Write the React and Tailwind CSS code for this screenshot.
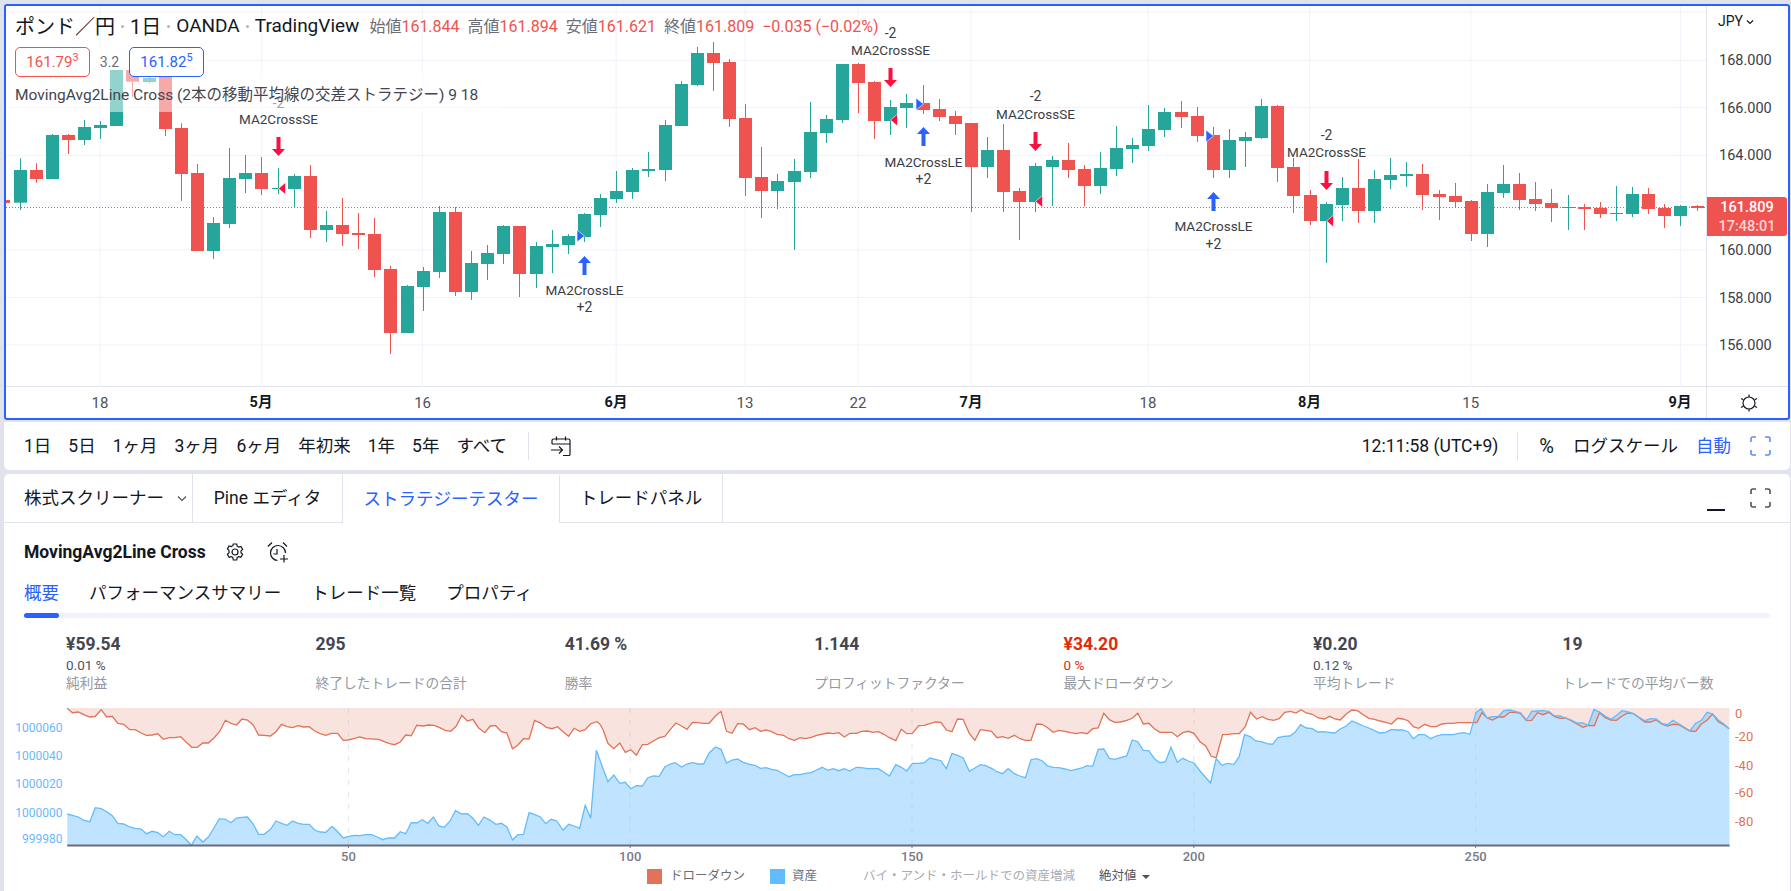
// candles: [wickTop, wickBottom, bodyTop, bodyBottom, up], read at 3x
const g = 1, r = 0;
const candles = [
  [475,630,510,608,g],[490,548,510,537,r],[402,537,405,537,g],[402,462,405,420,r],[360,435,381,420,g],
  [363,417,375,384,g],[150,378,150,378,g],[150,290,150,245,r],[150,250,234,246,g],[150,408,150,387,r],
  [370,603,384,522,r],[492,753,519,753,r],[651,777,669,753,g],[444,684,534,672,g],[465,579,519,537,g],
  [471,585,519,567,r],[504,582,564,567,g],[522,621,528,567,g],[495,714,528,690,r],[633,726,675,690,g],
  [594,738,675,702,r],[639,747,699,705,r],[654,831,702,810,r],[798,1062,807,999,r],[855,999,858,999,g],
  [801,933,813,861,g],[618,834,636,816,g],[621,888,636,876,r],[753,900,789,876,g],[735,840,759,792,g],
  [675,792,678,762,g],[678,891,678,822,r],[726,864,738,822,g],[690,819,732,741,g],[702,762,708,735,g],
  [639,726,642,711,g],[582,681,594,645,g],[513,609,573,597,g],[504,597,510,576,g],[456,531,507,513,g],
  [360,543,375,510,g],[243,378,252,378,g],[141,258,159,255,g],[126,273,159,189,r],[177,381,186,357,r],
  [312,588,354,534,r],[441,654,531,573,r],[522,627,543,573,g],[477,750,513,546,g],[306,534,396,516,g],
  [345,429,357,399,g],[192,369,192,360,g],[189,339,192,249,r],[243,417,246,363,r],[300,405,321,363,g],
  [282,384,309,324,g],[255,342,309,330,r],[297,363,327,351,r],[333,405,348,372,r],[369,636,369,501,r],
  [411,534,450,501,g],[372,636,450,576,r],[564,720,573,606,r],[489,636,498,606,g],[468,618,480,501,g],
  [429,534,480,510,r],[495,618,507,558,r],[456,582,504,558,g],[378,528,444,507,g],[414,489,435,447,g],
  [315,453,387,438,g],[324,411,336,390,g],[303,384,336,351,r],[321,426,348,408,r],[381,534,405,510,r],
  [387,534,420,510,g],[396,501,411,423,g],[297,417,318,414,g],[315,546,318,504,r],[474,639,501,588,r],
  [570,675,585,663,r],[606,789,612,663,g],[531,663,564,615,g],[477,669,564,633,r],[510,669,537,633,g],
  [474,567,525,540,g],[486,561,522,528,g],[492,630,522,585,r],[570,660,582,591,r],[549,621,588,606,r],
  [600,723,603,702,r],[552,741,576,702,g],[495,594,552,579,g],[519,630,552,600,r],[546,633,597,612,r],
  [567,666,609,624,r],[585,690,621,624,g],[612,690,621,627,r],[606,654,624,642,r],[558,663,639,642,g],
  [561,651,582,642,g],[564,642,582,627,r],[612,684,624,648,r],[615,678,618,648,g],[615,633,618,624,r],
];
const cx = (i) => 19.5 + 16.125 * i;

const hLines = [12, 60.5, 107.5, 155.3, 202, 250, 297.5, 345];
const vLines = [5, 15, 25, 37, 45, 52, 59, 70, 80, 90, 103];
const timeLabels = [
  ["18", 100], ["5月", 261, true], ["16", 422.6], ["6月", 616, true], ["13", 745], ["22", 858],
  ["7月", 971, true], ["18", 1148], ["8月", 1309.5, true], ["15", 1470.7], ["9月", 1680, true],
];
const prices = [["168.000", 60], ["166.000", 107.5], ["164.000", 154.7], ["160.000", 250], ["158.000", 297.7], ["156.000", 345]];

const signals = [
  { i: 16, side: "SE", arrow: 137, minus: 103, text: 119, tri: 188.5 },
  { i: 35, side: "LE", arrow: 256, text: 290, plus: 307, tri: 236 },
  { i: 54, side: "SE", arrow: 68, minus: 33, text: 50, tri: 120 },
  { i: 56, side: "LE", arrow: 127, text: 162, plus: 179, tri: 104 },
  { i: 63, side: "SE", arrow: 132, minus: 96, text: 114, tri: 201.5 },
  { i: 74, side: "LE", arrow: 192, text: 226, plus: 244, tri: 136 },
  { i: 81, side: "SE", arrow: 171, minus: 135, text: 152, tri: 221 },
];

const ranges = ["1日", "5日", "1ヶ月", "3ヶ月", "6ヶ月", "年初来", "1年", "5年", "すべて"];
const subTabs = ["概要", "パフォーマンスサマリー", "トレード一覧", "プロパティ"];
const stats = [
  { value: "¥59.54", sub: "0.01 %", label: "純利益" },
  { value: "295", label: "終了したトレードの合計" },
  { value: "41.69 %", label: "勝率" },
  { value: "1.144", label: "プロフィットファクター" },
  { value: "¥34.20", sub: "0 %", label: "最大ドローダウン", down: true },
  { value: "¥0.20", sub: "0.12 %", label: "平均トレード" },
  { value: "19", label: "トレードでの平均バー数" },
];

// equity and drawdown lines, one list per zoomed stretch of the chart
const ddA = "170,55 183,68 198,66 212,74 227,81 241,79 256,59 270,81 284,79 298,100 313,103 328,119 342,119 357,129 370,136 385,135 399,131 413,148 428,143 442,143 457,140 470,155 485,172 499,172 513,159 527,159 541,144 555,125 570,91 584,100 598,105 612,87 626,90 640,105 654,135 668,136 684,138 698,125 712,103 726,110 740,113 754,107 768,111 782,110 796,123 810,131 824,136 838,130 854,130 868,151 880,150 895,146 910,141 925,146 958,148 972,155 985,161 998,164 1012,156 1026,135 1040,137 1054,106 1070,108 1084,105 1098,106 1112,113 1126,121 1140,124 1154,108 1168,76 1182,93 1196,88 1210,113 1226,128 1240,108 1254,107 1268,125 1282,129 1296,176 1310,165 1324,146 1338,147 1352,91 1368,100 1382,112 1396,116 1410,110 1424,125 1438,139 1452,115 1466,124 1480,119 1494,101 1510,95";
const ddB = "0,103 8,120 20,160 35,176 50,159 64,187 78,179 92,196 107,164 121,163 135,153 150,143 164,139 178,118 192,99 206,108 220,118 234,97 248,98 262,100 276,100 292,78 306,64 320,124 334,130 348,101 362,102 378,119 392,113 406,124 420,120 434,125 448,133 464,136 478,146 492,151 506,143 520,146 534,142 548,136 576,129 590,131 604,128 618,141 632,130 648,130 662,124 676,123 690,127 704,125 718,133 732,143 748,152 762,118 776,131 790,130 806,107 820,106 834,101 848,96 862,97 876,120 890,125 904,87 918,88 934,130 948,151 962,119 976,121 990,124 1004,143 1018,140 1032,145 1048,136 1062,146 1076,151 1090,151 1104,102 1118,103 1132,113 1146,127 1160,121 1176,124 1190,128 1204,131 1218,128 1232,131 1246,116 1260,114 1274,70 1288,89 1302,97 1316,96 1332,91 1346,85 1360,70 1374,102 1388,100 1402,116 1416,127 1430,127 1446,127 1460,140 1474,128 1488,124 1502,130";
const ddC = "0,155 15,168 30,199 43,203 60,134 75,133 90,131 104,131 120,110 134,67 150,87 165,80 180,88 195,91 210,86 225,67 240,64 255,69 268,59 282,69 298,73 314,84 330,87 344,79 358,87 372,90 388,72 403,60 418,62 433,74 448,85 463,88 478,93 493,97 508,102 524,85 538,87 552,92 566,110 580,115 596,103 612,110 626,110 642,102 656,100 672,100 686,98 700,98 722,98 735,97 748,68 762,84 776,90 792,81 806,81 822,67 836,67 850,70 866,92 880,91 895,68 910,74 925,67 940,79 955,85 970,84 985,92 1000,102 1016,112 1030,106 1046,107 1060,68 1075,83 1090,90 1105,91 1120,78 1135,69 1150,71 1165,83 1180,96 1195,96 1210,90 1225,102 1240,108 1255,103 1270,104 1285,114 1300,123 1315,124 1330,102 1345,91 1360,72 1375,95 1390,105 1404,116";
const eqA = "170,372 183,376 198,381 212,391 227,395 241,353 256,356 270,365 284,377 298,400 313,402 328,411 342,415 357,417 370,431 385,424 399,428 413,440 428,424 442,434 457,434 470,448 484,466 498,438 513,456 527,441 541,414 555,386 570,388 584,398 598,384 612,382 626,381 640,402 654,433 668,433 684,418 698,393 712,400 726,406 740,393 754,400 768,403 782,403 796,420 810,426 824,427 840,409 854,425 868,444 880,440 895,436 910,437 925,434 940,434 954,441 968,449 982,444 998,444 1012,425 1026,431 1040,398 1054,399 1068,389 1082,400 1096,381 1110,408 1124,412 1138,393 1152,362 1168,372 1182,371 1196,385 1210,406 1224,381 1240,391 1254,403 1268,400 1282,411 1296,450 1310,434 1324,433 1338,368 1352,374 1366,380 1380,401 1394,388 1408,393 1424,421 1438,403 1452,408 1466,415 1480,346 1494,385 1508,181";
const eqB = "20,275 35,255 50,280 64,277 78,296 92,287 107,288 121,263 135,258 150,259 164,231 178,222 190,218 206,231 220,222 234,218 248,222 262,222 276,189 292,171 306,178 320,219 334,210 348,207 362,217 378,223 392,226 406,235 420,233 434,238 448,241 464,251 478,260 492,254 506,254 520,250 534,248 548,240 562,232 576,241 590,236 604,242 618,236 632,243 648,232 662,233 676,236 690,236 704,236 718,247 732,258 748,224 762,232 776,243 790,220 806,220 820,218 834,204 848,208 862,212 876,236 890,190 904,196 918,203 934,244 948,234 962,224 976,227 990,235 1004,245 1018,251 1032,236 1048,251 1062,258 1076,263 1090,209 1104,206 1118,212 1132,228 1146,232 1160,233 1176,237 1190,242 1204,238 1218,234 1232,227 1246,229 1260,178 1274,177 1288,205 1302,208 1316,203 1332,198 1346,150 1360,155 1374,181 1388,182 1402,206 1416,218 1430,215 1444,172 1460,217 1474,205 1488,213 1502,219";
const eqC = "0,243 28,279 43,206 58,226 73,220 90,223 104,200 118,134 133,140 148,153 163,155 178,161 192,163 207,143 222,139 238,138 252,127 267,104 282,114 298,116 312,126 328,125 342,127 358,129 372,117 388,108 403,93 418,100 433,108 448,114 463,122 478,129 493,127 508,118 524,120 538,120 552,125 566,146 580,134 596,134 612,146 626,138 642,134 656,134 672,134 686,130 700,128 716,133 732,68 746,56 762,84 776,80 792,79 806,62 822,60 836,64 850,68 866,90 880,64 895,63 910,62 925,64 940,77 955,78 970,84 985,90 1000,99 1016,99 1030,106 1045,58 1060,66 1075,78 1090,88 1105,76 1120,62 1135,66 1150,71 1165,82 1180,92 1195,86 1210,87 1225,100 1240,104 1255,91 1270,101 1285,112 1300,122 1315,100 1330,91 1345,67 1360,72 1375,90 1390,102 1404,116";

const toPts = (s, scale, off) =>
  s.split(" ").map((p) => {
    const [x, y] = p.split(",").map(Number);
    return [off + x / scale, 690 + y / 3];
  });
const line = (a, b, c) => [...toPts(a, 2.529, 0), ...toPts(b, 2.529, 600), ...toPts(c, 2.653, 1200)];
const ptsStr = (pts) => pts.map(([x, y]) => `${x.toFixed(1)},${y.toFixed(1)}`).join(" ");

const drawdown = line(ddA, ddB, ddC);
const equity = line(eqA, eqB, eqC);
const X0 = 67.2;
const X1 = 1729.6;
const TOP = 708;
const BASE = 845;

function CandleChart() {
  return (
    <svg className="block absolute inset-0" width="1702" height="381" viewBox="6 6 1702 381">
      {hLines.map((y) => (
        <line key={y} x1="6" x2="1708" y1={y} y2={y} stroke="#f0f3fa" strokeWidth="1" />
      ))}
      {vLines.map((i) => (
        <line key={i} x1={cx(i)} x2={cx(i)} y1="6" y2="387" stroke="#f0f3fa" strokeWidth="1" />
      ))}
      <rect x="6" y="200" width="4" height="3" fill="#ef5350" />
      <line x1="6" x2="1708" y1="207.5" y2="207.5" stroke="#ef5350" strokeWidth="1" strokeDasharray="1 2" />
      {candles.map(([wt, wb, bt, bb, up], i) => {
        const color = up ? "#26a69a" : "#ef5350";
        const x = Math.round(cx(i)) + 0.5;
        return (
          <g key={i} fill={color}>
            <rect x={x - 0.5} y={wt / 3} width="1" height={(wb - wt) / 3} />
            <rect x={x - 6.5} y={bt / 3} width="13" height={Math.max(1, (bb - bt) / 3)} />
          </g>
        );
      })}
      {signals.map((s) => {
        const x = Math.round(cx(s.i)) + 0.5;
        const up = s.side === "LE";
        const color = up ? "#2962ff" : "#ff0f3f";
        const a = s.arrow;
        return (
          <g key={s.i}>
            {up ? (
              <path d={`M${x} ${a}l6.5 7h-4.5v12h-4v-12h-4.5z`} fill={color} />
            ) : (
              <path d={`M${x} ${a + 19}l-6.5 -7h4.5v-12h4v12h4.5z`} fill={color} />
            )}
            {up ? (
              <path d={`M${x - 7.5} ${s.tri - 6}l7.5 6l-7.5 6z`} fill={color} stroke="#fff" strokeWidth="0.6" />
            ) : (
              <path d={`M${x + 7} ${s.tri - 6}l-7 6l7 6z`} fill={color} stroke="#fff" strokeWidth="0.6" />
            )}
            <text x={x} y={s.text + 5} textAnchor="middle" fontSize="13.5" fill="#3b3e47">
              {`MA2Cross${s.side}`}
            </text>
            {s.minus && (
              <text x={x} y={s.minus + 5} textAnchor="middle" fontSize="14" fill="#3b3e47">-2</text>
            )}
            {s.plus && (
              <text x={x} y={s.plus + 5} textAnchor="middle" fontSize="14" fill="#3b3e47">+2</text>
            )}
          </g>
        );
      })}
    </svg>
  );
}

function Dot() {
  return <span className="w-[3px] h-[3px] bg-[#b2b5be] rounded-full mx-[6px] shrink-0" />;
}

function Legend() {
  return (
    <div className="absolute left-0 top-0 text-[#131722]">
      <div className="flex items-center h-[41px] pl-[9px] whitespace-nowrap">
        <span className="text-[20px]">ポンド／円</span>
        <Dot />
        <span className="text-[20px]">1日</span>
        <Dot />
        <span className="text-[19px]">OANDA</span>
        <Dot />
        <span className="text-[19px]">TradingView</span>
        <div className="flex items-center ml-[10px] text-[16px] text-[#ef5350]">
          <span className="text-[#6a6d78]">始値</span>161.844
          <span className="text-[#6a6d78] ml-[8px]">高値</span>161.894
          <span className="text-[#6a6d78] ml-[8px]">安値</span>161.621
          <span className="text-[#6a6d78] ml-[8px]">終値</span>161.809
          <span className="ml-[8px]">−0.035 (−0.02%)</span>
        </div>
      </div>
      <div className="relative flex items-start w-[199px] h-[23px] bg-white ml-[1px] pl-[8px]">
        <div className="w-[75px] h-[30px] shrink-0 flex items-center justify-center bg-white border border-[#ef5350] rounded-[5px] text-[#ef5350] text-[15px]">
          161.79<sup className="text-[11px] top-[-4px]">3</sup>
        </div>
        <div className="w-[39px] h-[30px] shrink-0 flex items-center justify-center text-[14px] text-[#6a6d78]">3.2</div>
        <div className="w-[75px] h-[30px] shrink-0 flex items-center justify-center bg-white border border-[#2962ff] rounded-[5px] text-[#2962ff] text-[15px]">
          161.82<sup className="text-[11px] top-[-4px]">5</sup>
        </div>
      </div>
      <div className="h-[42px] w-[494px] bg-white/50 flex items-end pb-[5px] pl-[9px] text-[15.5px] text-[#434651] whitespace-nowrap">
        MovingAvg2Line Cross (2本の移動平均線の交差ストラテジー) 9 18
      </div>
    </div>
  );
}

function PriceAxis() {
  return (
    <div className="relative w-[82px] shrink-0 border-l border-[#e0e3eb] text-[#131722] text-[14.5px]">
      <div className="absolute left-[11px] top-[5px] flex items-center gap-[3px] text-[14px]">
        JPY
        <svg width="8" height="6" viewBox="0 0 8 6">
          <path d="M1 1.5l3 3 3-3" fill="none" stroke="#131722" strokeWidth="1.2" />
        </svg>
      </div>
      {prices.map(([p, y]) => (
        <span key={p} className="absolute left-[12px] -translate-y-1/2 text-[#3b3e47]" style={{ top: y - 5 }}>
          {p}
        </span>
      ))}
      <div className="absolute left-0 top-[191px] w-[80px] h-[39px] bg-[#ef5350] rounded-r-[3px] flex flex-col items-center justify-center text-white leading-[19px]">
        <span className="font-medium">161.809</span>
        <span className="text-white/75 font-medium">17:48:01</span>
      </div>
    </div>
  );
}

function TimeAxis() {
  return (
    <div className="flex h-[32px] border-t border-[#e0e3eb]">
      <div className="relative flex-1 text-[15px] text-[#4c525e]">
        {timeLabels.map(([t, x, bold]) => (
          <span
            key={x}
            className={bold ? "absolute top-[5px] -translate-x-1/2 font-bold text-[#131722] text-[14.5px]" : "absolute top-[5px] -translate-x-1/2"}
            style={{ left: x - 6 }}
          >
            {t}
          </span>
        ))}
      </div>
      <div className="w-[82px] shrink-0 border-l border-[#e0e3eb] flex items-center justify-center pl-[3px]">
        <svg width="20" height="20" viewBox="0 0 20 20" fill="none" stroke="#131722" strokeWidth="1.2">
          <circle cx="10" cy="10" r="6" />
          <path d="M10 1.5v2.5M10 16v2.5M2 5.5l2.3 1.3M15.7 13.2l2.3 1.3M2 14.5l2.3-1.3M15.7 6.8l2.3-1.3" />
        </svg>
      </div>
    </div>
  );
}

function FullscreenIcon({ color, className }) {
  return (
    <svg className={className} width="21" height="20" viewBox="0 0 21 20" fill="none" stroke={color} strokeWidth="1.6">
      <path d="M1 6V3a2 2 0 0 1 2-2h3M15 1h3a2 2 0 0 1 2 2v3M20 14v3a2 2 0 0 1-2 2h-3M6 19H3a2 2 0 0 1-2-2v-3" />
    </svg>
  );
}

function Toolbar() {
  return (
    <div className="flex items-center h-[48px] mt-[2px] bg-white rounded-b-[5px] pl-[20px] text-[17.5px] text-[#131722] whitespace-nowrap">
      <div className="flex items-center gap-[17px]">
        {ranges.map((t) => (
          <span key={t}>{t}</span>
        ))}
      </div>
      <div className="w-px h-[28px] bg-[#e0e3eb] ml-[21px]" />
      <svg className="ml-[21px]" width="22" height="22" viewBox="0 0 22 22" fill="none" stroke="#131722" strokeWidth="1.2">
        <path d="M2 9V5.5a1.5 1.5 0 0 1 1.5-1.5h15A1.5 1.5 0 0 1 20 5.5v14a1 1 0 0 1-1 1h-6M6.5 1.5v4M15.5 1.5v4M2 9h18M1 15h11M9 11.5l3.5 3.5L9 18.5" />
      </svg>
      <div className="flex items-center ml-auto">
        <span>12:11:58 (UTC+9)</span>
        <div className="w-px h-[28px] bg-[#e0e3eb] ml-[19px] mr-[21px]" />
        <span className="text-[20px]">%</span>
        <span className="ml-[19px]">ログスケール</span>
        <span className="ml-[18px] text-[#2962ff]">自動</span>
        <FullscreenIcon color="#5b8cff" className="ml-[19px] mr-[19px]" />
      </div>
    </div>
  );
}

function Tabs() {
  return (
    <div className="flex items-stretch h-[49px] border-b border-[#e0e3eb] text-[17.5px] text-[#131722] whitespace-nowrap">
      <div className="w-[189px] flex items-center pl-[20px] border-r border-[#e0e3eb]">
        株式スクリーナー
        <svg className="ml-[13px]" width="10" height="7" viewBox="0 0 10 7">
          <path d="M1 1.5l4 4 4-4" fill="none" stroke="#50535e" strokeWidth="1.2" />
        </svg>
      </div>
      <div className="w-[150px] flex items-center justify-center border-r border-[#e0e3eb]">Pine エディタ</div>
      <div className="w-[217px] flex items-center justify-center border-r border-[#e0e3eb] text-[#2962ff] bg-white relative top-px">
        ストラテジーテスター
      </div>
      <div className="w-[163px] flex items-center justify-center border-r border-[#e0e3eb]">トレードパネル</div>
      <div className="flex items-center ml-auto mr-[19px]">
        <div className="w-[18px] h-[1.5px] bg-[#131722] mt-[24px] mr-[25px]" />
        <FullscreenIcon color="#50535e" />
      </div>
    </div>
  );
}

function Header() {
  return (
    <div className="px-[20px]">
      <div className="flex items-center h-[54px] pt-[4px]">
        <span className="text-[17.5px] font-bold text-[#131722] w-[191px] whitespace-nowrap">MovingAvg2Line Cross</span>
        <svg className="ml-[10px]" width="20" height="20" viewBox="0 0 20 20" fill="none" stroke="#131722" strokeWidth="1.2">
          <path d="M8.3 2h3.4l.5 2.2 1.6.9 2.1-.7 1.7 3-1.6 1.5v1.9l1.6 1.5-1.7 3-2.1-.7-1.6.9-.5 2.5H8.3l-.5-2.5-1.6-.9-2.1.7-1.7-3 1.6-1.5V8.4L2.4 6.9l1.7-3 2.1.7 1.6-.9z" />
          <circle cx="10" cy="10" r="3" />
        </svg>
        <svg className="ml-[21px]" width="24" height="24" viewBox="0 0 24 24" fill="none" stroke="#131722" strokeWidth="1.2">
          <path d="M11.5 20.5a7.5 7.5 0 1 1 8-7.5M1.8 6.5L6 2.5M21 6.5l-4-4M3.5 5L5.5 3M11 9v5h-3.5M18 15v7.5M14 19h8" />
        </svg>
      </div>
      <div className="flex gap-[30px] text-[17.5px] text-[#131722] h-[33px] items-center whitespace-nowrap">
        {subTabs.map((t, i) => (
          <span key={t} className={i === 0 ? "text-[#2962ff]" : ""}>{t}</span>
        ))}
      </div>
      <div className="h-[5px] bg-[#f0f3fa] rounded-full mt-[3px]">
        <div className="w-[35px] h-[5px] bg-[#2962ff] rounded-full" />
      </div>
    </div>
  );
}

function Stats() {
  return (
    <div className="grid grid-cols-[repeat(7,249.4px)] pl-[62px] pt-[15px] h-[73px] whitespace-nowrap">
      {stats.map((s) => (
        <div key={s.label} className="flex flex-col">
          <span className={s.down ? "text-[17.5px] leading-[22px] font-bold text-[#e02b0c]" : "text-[17.5px] leading-[22px] font-bold text-[#434651]"}>
            {s.value}
          </span>
          <span className={s.down ? "text-[13.5px] h-[19px] leading-[21px] text-[#e02b0c]" : "text-[13.5px] h-[19px] leading-[21px] text-[#50535e]"}>
            {s.sub}
          </span>
          <span className="text-[13.75px] leading-[19px] text-[#9598a1]">{s.label}</span>
        </div>
      ))}
    </div>
  );
}

function EquityChart() {
  const ticks = [50, 100, 150, 200, 250];
  const yLeft = [["1000060", 727.7], ["1000040", 755.7], ["1000020", 783], ["1000000", 812.7], ["999980", 838.7]];
  const yRight = [["0", 713], ["-20", 736.7], ["-40", 765.7], ["-60", 792.7], ["-80", 821.3]];
  const ddPoly = `${X0},${TOP} ${ptsStr(drawdown)} ${X1},${TOP}`;
  const eqPoly = `${X0},${BASE} ${ptsStr(equity)} ${X1},${BASE}`;
  return (
    <svg className="block absolute left-0 top-[700px]" width="1791" height="191" viewBox="0 700 1791 191">
      <polygon points={ddPoly} fill="#e27258" fillOpacity="0.2" />
      <polygon points={eqPoly} fill="#61bcff" fillOpacity="0.4" />
      {ticks.map((t) => {
        const x = 66.6 + t * 5.636;
        return (
          <g key={t}>
            <line x1={x} x2={x} y1={TOP} y2={BASE} stroke="#b2b5be" strokeOpacity="0.35" strokeWidth="1" strokeDasharray="5 7" />
            <line x1={x} x2={x} y1={BASE} y2={BASE + 3} stroke="#787b86" strokeWidth="1" />
            <text x={x} y={860.5} textAnchor="middle" fontSize="13" fontWeight="500" fill="#787b86">{t}</text>
          </g>
        );
      })}
      <polyline points={ptsStr(drawdown)} fill="none" stroke="#e27258" strokeWidth="1.3" />
      <polyline points={ptsStr(equity)} fill="none" stroke="#61bcff" strokeWidth="1.3" />
      <line x1={X0} x2={X1} y1="845.5" y2="845.5" stroke="#6a6d78" strokeWidth="2" />
      {yLeft.map(([t, y]) => (
        <text key={t} x="62.5" y={y + 4.5} textAnchor="end" fontSize="12" fill="#6ab8ff">{t}</text>
      ))}
      {yRight.map(([t, y]) => (
        <text key={t} x="1735" y={y + 4.5} fontSize="13" fill="#e27258">{t}</text>
      ))}
    </svg>
  );
}

function ChartLegend() {
  return (
    <div className="absolute left-[647px] top-[869px] flex items-center h-[15px] text-[12.5px] text-[#6a6d78] whitespace-nowrap">
      <span className="w-[15px] h-[15px] bg-[#e27258]" />
      <span className="ml-[8px]">ドローダウン</span>
      <span className="w-[15px] h-[15px] bg-[#61bcff] ml-[25px]" />
      <span className="ml-[7px]">資産</span>
      <span className="ml-[46px] text-[#a8abb3]">バイ・アンド・ホールドでの資産増減</span>
      <span className="ml-[24px] text-[#50535e]">絶対値</span>
      <span className="ml-[5px] border-x-[4px] border-x-transparent border-t-[4px] border-t-[#50535e]" />
    </div>
  );
}

export default function App() {
  return (
    <div className="relative w-[1791px] h-[891px] overflow-hidden bg-[#e0e3eb] font-['Roboto','Noto_Sans_CJK_JP',sans-serif]">
      <div className="flex flex-col pt-[4px] pl-[4px] pr-px">
        <div className="h-[416px] border-2 border-[#2962ff] rounded-[3px] bg-white flex flex-col">
          <div className="flex flex-1 min-h-0">
            <div className="relative flex-1">
              <CandleChart />
              <Legend />
            </div>
            <PriceAxis />
          </div>
          <TimeAxis />
        </div>
        <Toolbar />
        <div className="mt-[4px] h-[417px] bg-white rounded-t-[5px]">
          <Tabs />
          <Header />
          <Stats />
        </div>
      </div>
      <EquityChart />
      <ChartLegend />
    </div>
  );
}
